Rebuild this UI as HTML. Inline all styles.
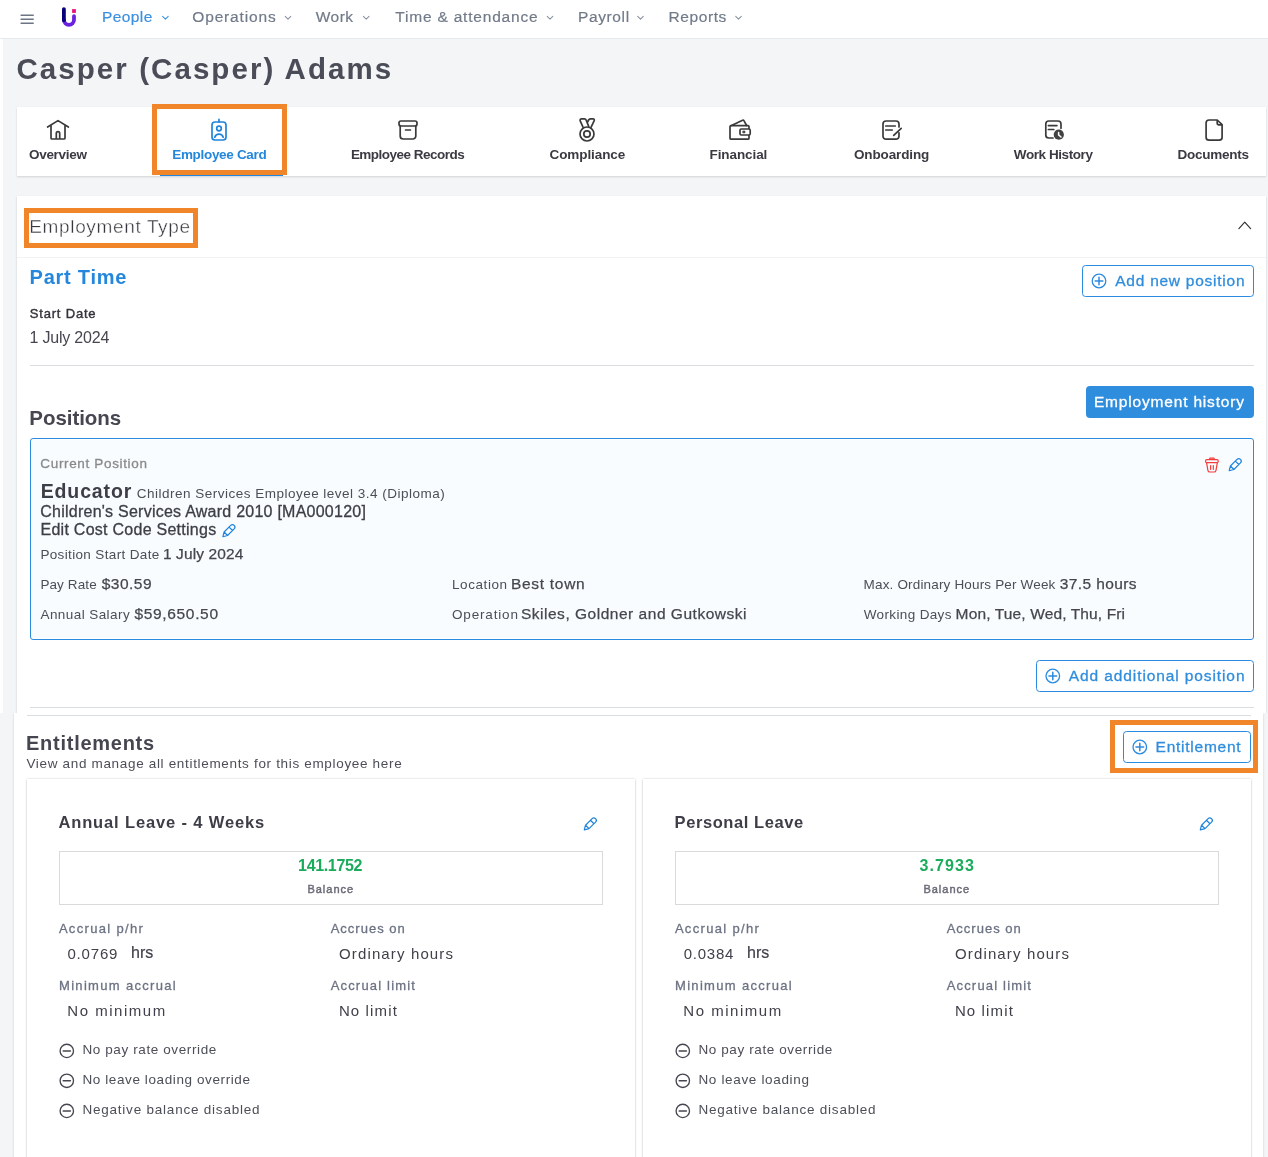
<!DOCTYPE html>
<html lang="en">
<head>
<meta charset="utf-8">
<title>Casper (Casper) Adams - Employee Card</title>
<style>
html,body{margin:0;padding:0}
body{width:1268px;height:1157px;position:relative;overflow:hidden;background:#fff;font-family:"Liberation Sans",sans-serif}
.a{position:absolute;box-sizing:border-box}
.t{position:absolute;white-space:nowrap;line-height:1;display:block}
svg{position:absolute;left:0;top:0;overflow:visible}
.s{fill:none;stroke-linecap:round;stroke-linejoin:round}
</style>
</head>
<body>
<!-- ===== upper capture (y 0..713) ===== -->
<div class="a" style="left:0;top:0;width:1268px;height:713px;overflow:hidden;background:#fff">
  <div class="a" style="left:3px;top:38px;width:1265px;height:675px;background:#f4f5f7"></div>
  <!-- header -->
  <div class="a" style="left:0;top:0;width:1268px;height:39px;background:#fff;border-bottom:1px solid #e5eaee"></div>
  <!-- tab bar -->
  <div class="a" style="left:17px;top:107px;width:1249px;height:69px;background:#fff;box-shadow:0 1px 2px rgba(0,0,0,.15)"></div>
  <div class="a" style="left:160px;top:173px;width:123px;height:3px;background:#2487dc"></div>
  <!-- employment card -->
  <div class="a" style="left:17px;top:196px;width:1249px;height:530px;background:#fff;box-shadow:0 1px 2px rgba(0,0,0,.18)"></div>
  <div class="a" style="left:17px;top:257px;width:1249px;height:1px;background:#f1f2f4"></div>
  <div class="a" style="left:30px;top:365px;width:1224px;height:1px;background:#dadee1"></div>
  <div class="a" style="left:30px;top:707px;width:1224px;height:1px;background:#dadee1"></div>
  <!-- buttons -->
  <div class="a" style="left:1082px;top:265px;width:172px;height:32px;border:1px solid #2b8bdf;border-radius:3.5px;background:#fff"></div>
  <div class="a" style="left:1086px;top:386px;width:168px;height:32px;border-radius:4px;background:#2e8ddc"></div>
  <div class="a" style="left:1036px;top:660px;width:218px;height:32px;border:1px solid #2b8bdf;border-radius:3.5px;background:#fff"></div>
  <!-- position card -->
  <div class="a" style="left:30px;top:438px;width:1224px;height:202px;border:1px solid #2b8bdf;border-radius:3px;background:#f9fcfe;box-shadow:inset 0 0 0 1px #fff"></div>
  <!-- highlight boxes -->
  <div class="a" style="left:152px;top:104px;width:135px;height:71px;border:5px solid #f1852a"></div>
  <div class="a" style="left:24px;top:208px;width:174px;height:40px;border:5px solid #f1852a"></div>
</div>
<!-- ===== lower capture (y 713..1157) ===== -->
<div class="a" style="left:0;top:713px;width:1268px;height:444px;overflow:hidden;background:#f4f5f7">
  <div class="a" style="left:14px;top:0;width:1249px;height:460px;background:#fff;box-shadow:0 1px 2px rgba(0,0,0,.18)"></div>
  <div class="a" style="left:27px;top:1.5px;width:1224px;height:1px;background:#dadee1"></div>
  <!-- cards -->
  <div class="a" style="left:27px;top:66px;width:608px;height:400px;background:#fff;box-shadow:0 0 2px rgba(0,0,0,.2),0 1px 2px rgba(0,0,0,.1)"></div>
  <div class="a" style="left:643px;top:66px;width:608px;height:400px;background:#fff;box-shadow:0 0 2px rgba(0,0,0,.2),0 1px 2px rgba(0,0,0,.1)"></div>
  <div class="a" style="left:59px;top:138px;width:544px;height:53.5px;border:1px solid #d9dadc;background:#fff"></div>
  <div class="a" style="left:675px;top:138px;width:544px;height:53.5px;border:1px solid #d9dadc;background:#fff"></div>
  <!-- entitlement button + highlight -->
  <div class="a" style="left:1123px;top:18px;width:128px;height:32px;border:1px solid #2b8bdf;border-radius:3.5px;background:#fff"></div>
  <div class="a" style="left:1110px;top:7px;width:148px;height:53px;border:5px solid #f1852a"></div>
</div>
<!-- ===== icons ===== -->
<svg width="1268" height="1157" viewBox="0 0 1268 1157">
<!-- hamburger -->
<g class="s" stroke="#6b7583" stroke-width="1.5" stroke-linecap="butt"><path d="M21.1 15.15h12.1M21.1 19.15h12.1M21.1 23.15h12.1"/></g>
<!-- logo -->
<g class="s" stroke-width="3.8" stroke-linecap="butt">
<path d="M74 16.2V19.8A5.05 5.05 0 0 1 63.9 19.8" stroke="#6a22e0"/>
<path d="M63.9 9.1V20.2" stroke="#06007a"/>
</g>
<rect x="72.1" y="9.1" width="3.8" height="3.8" fill="#e6157a"/>
<!-- nav chevrons -->
<g class="s" stroke-width="1.05" stroke="#8a92a0" transform="translate(0 .4)">
<path d="M162.6 16l2.8 2.8 2.8-2.8" stroke="#3b8fe0"/>
<path d="M285.2 16l2.8 2.8 2.8-2.8"/>
<path d="M363.4 16l2.8 2.8 2.8-2.8"/>
<path d="M547.2 16l2.8 2.8 2.8-2.8"/>
<path d="M637.7 16l2.8 2.8 2.8-2.8"/>
<path d="M735.7 16l2.8 2.8 2.8-2.8"/>
</g>
<!-- section chevron up -->
<path class="s" d="M1238.9 228.6L1244.75 222.2 1250.6 228.6" stroke="#333" stroke-width="1.2"/>
<!-- tab icons -->
<g class="s" stroke="#3a3a3a" stroke-width="1.7">
<!-- home -->
<path d="M47.6 127L58 120.6 68.4 127M51 125V138a1 1 0 0 0 1 1H64a1 1 0 0 0 1-1V125M56.3 139V133.4a1.7 1.7 0 0 1 3.4 0V139"/>
<!-- archive -->
<rect x="399" y="121" width="18" height="5" rx="2"/>
<path d="M400.2 126V136a3 3 0 0 0 3 3H412.8a3 3 0 0 0 3-3V126M405.6 130H410.4"/>
<!-- medal -->
<circle cx="587" cy="134" r="7"/><circle cx="587" cy="134" r="3.2"/>
<path d="M583 127.2L580.2 120.8a1.4 1.4 0 0 1 1.3-2h3a1.6 1.6 0 0 1 1.5 1L588.7 126.3M587.4 122.4L588.6 120a2.2 2.2 0 0 1 1.8-1.2h2.6a1.3 1.3 0 0 1 1.2 1.9L591 127.3"/>
<!-- wallet -->
<rect x="730" y="125.7" width="19" height="13.5" rx="1"/>
<path d="M731.5 125.5L742.6 120.2a1 1 0 0 1 1.3 .4L746.6 125.5"/>
<rect x="740" y="129" width="10.2" height="6" rx="1.2" fill="#fff"/>
<rect x="743.2" y="131.1" width="1.7" height="1.7" fill="#3a3a3a" stroke-width="0.8"/>
<!-- onboarding -->
<path d="M899 127V124a3 3 0 0 0-3-3H886a3 3 0 0 0-3 3V136.2a3 3 0 0 0 3 3H896a3 3 0 0 0 3-3V132.8M885.8 126H895.2M885.8 130H892.2M901.2 128.3L893.7 135.4"/>
<!-- work history -->
<path d="M1061 128.2V124a3 3 0 0 0-3-3H1048.8a3 3 0 0 0-3 3V135a3 3 0 0 0 3 3H1053M1048.4 125.6H1056.9M1048.4 129.5H1053.8"/>
<!-- documents -->
<path d="M1217.2 120H1209.1a3 3 0 0 0-3 3V137.2a3 3 0 0 0 3 3H1219.1a3 3 0 0 0 3-3V124.6ZM1217.2 120V123a1.8 1.8 0 0 0 1.8 1.8H1222"/>
</g>
<circle cx="1058.8" cy="134.7" r="5.1" fill="#424242"/>
<path class="s" d="M1058.6 132.4V134.9L1061 137" stroke="#fff" stroke-width="1.5"/>
<!-- active tab icon -->
<g class="s" stroke="#1f84da" stroke-width="1.7">
<rect x="212" y="122" width="14" height="18" rx="3"/>
<path d="M219 119.4V122M214.8 137.2a4.4 4.4 0 0 1 8.4 0"/>
<circle cx="219" cy="128.5" r="2.3"/>
</g>
<!-- plus circles -->
<g class="s" stroke="#2b8bdf" stroke-width="1.3">
<circle cx="1099" cy="281" r="6.8"/><path stroke-width="1.5" d="M1095.15 281h7.7M1099 277.15v7.7"/>
<circle cx="1052.8" cy="676" r="6.8"/><path stroke-width="1.5" d="M1048.95 676h7.7M1052.8 672.15v7.7"/>
<circle cx="1139.8" cy="747" r="6.8"/><path stroke-width="1.5" d="M1135.95 747h7.7M1139.8 743.15v7.7"/>
</g>
<!-- trash -->
<g class="s" stroke="#f53b3b" stroke-width="1.2" transform="translate(0 .5)">
<path d="M1209.6 458.9V458.2a.6 .6 0 0 1 .6-.6H1213.6a.6 .6 0 0 1 .6 .6V458.9"/>
<rect x="1205.6" y="459.2" width="12.6" height="2.9" rx="1.2"/>
<path d="M1206.6 462.4L1207.9 469.8a2 2 0 0 0 2 1.7H1214a2 2 0 0 0 2-1.7L1217.3 462.4M1210.6 465V468.8M1213.3 465V468.8"/>
</g>
<!-- pencils -->
<g class="s" stroke="#1f84da" stroke-width="1.2">
<path d="M.4 0L4.6-2.45H13.9A2.45 2.45 0 0 1 13.9 2.45H4.6ZM4.6-2.45V2.45M11.6-2.45V2.45" transform="translate(1228.9 471) rotate(-45)"/>
<path d="M.4 0L4.6-2.45H13.9A2.45 2.45 0 0 1 13.9 2.45H4.6ZM4.6-2.45V2.45M11.6-2.45V2.45" transform="translate(222.6 537) rotate(-45)"/>
<path d="M.4 0L4.6-2.45H13.9A2.45 2.45 0 0 1 13.9 2.45H4.6ZM4.6-2.45V2.45M11.6-2.45V2.45" transform="translate(584 830.2) rotate(-45)"/>
<path d="M.4 0L4.6-2.45H13.9A2.45 2.45 0 0 1 13.9 2.45H4.6ZM4.6-2.45V2.45M11.6-2.45V2.45" transform="translate(1200 830.2) rotate(-45)"/>
</g>
<!-- minus circles -->
<g class="s" stroke="#45464f" stroke-width="1.35">
<circle cx="66.8" cy="1050.9" r="6.7"/><path stroke-width="1.5" d="M63.2 1050.9h7.2"/>
<circle cx="66.8" cy="1080.8" r="6.7"/><path stroke-width="1.5" d="M63.2 1080.8h7.2"/>
<circle cx="66.8" cy="1110.9" r="6.7"/><path stroke-width="1.5" d="M63.2 1110.9h7.2"/>
<circle cx="682.8" cy="1050.9" r="6.7"/><path stroke-width="1.5" d="M679.2 1050.9h7.2"/>
<circle cx="682.8" cy="1080.8" r="6.7"/><path stroke-width="1.5" d="M679.2 1080.8h7.2"/>
<circle cx="682.8" cy="1110.9" r="6.7"/><path stroke-width="1.5" d="M679.2 1110.9h7.2"/>
</g>

</svg>
<!-- ===== text ===== -->
<div class="a" style="left:0;top:0;width:1268px;height:1157px;will-change:transform">
<span class="t" style="left:101.93px;top:9.00px;font-size:15.5px;color:#3b8fe0;letter-spacing:0.432px;-webkit-text-stroke:0.2px #3b8fe0;">People</span>
<span class="t" style="left:192.27px;top:9.00px;font-size:15.5px;color:#717a89;letter-spacing:0.845px;-webkit-text-stroke:0.2px #717a89;">Operations</span>
<span class="t" style="left:315.83px;top:9.00px;font-size:15.5px;color:#717a89;letter-spacing:0.420px;-webkit-text-stroke:0.2px #717a89;">Work</span>
<span class="t" style="left:395.35px;top:9.00px;font-size:15.5px;color:#717a89;letter-spacing:0.792px;-webkit-text-stroke:0.2px #717a89;">Time &amp; attendance</span>
<span class="t" style="left:577.93px;top:9.00px;font-size:15.5px;color:#717a89;letter-spacing:0.635px;-webkit-text-stroke:0.2px #717a89;">Payroll</span>
<span class="t" style="left:668.55px;top:9.00px;font-size:15.5px;color:#717a89;letter-spacing:0.578px;-webkit-text-stroke:0.2px #717a89;">Reports</span>
<span class="t" style="left:16.44px;top:54.00px;font-size:29.5px;color:#4a4d57;letter-spacing:2.070px;font-weight:700;">Casper (Casper) Adams</span>
<span class="t" style="left:29.01px;top:148.00px;font-size:13.5px;color:#3a3b42;letter-spacing:-0.308px;font-weight:700;">Overview</span>
<span class="t" style="left:172.22px;top:148.00px;font-size:13.5px;color:#2487dc;letter-spacing:-0.318px;font-weight:700;">Employee Card</span>
<span class="t" style="left:350.88px;top:148.00px;font-size:13.5px;color:#3a3b42;letter-spacing:-0.517px;font-weight:700;">Employee Records</span>
<span class="t" style="left:549.59px;top:148.00px;font-size:13.5px;color:#3a3b42;letter-spacing:-0.100px;font-weight:700;">Compliance</span>
<span class="t" style="left:709.50px;top:148.00px;font-size:13.5px;color:#3a3b42;letter-spacing:-0.081px;font-weight:700;">Financial</span>
<span class="t" style="left:854.01px;top:148.00px;font-size:13.5px;color:#3a3b42;letter-spacing:-0.135px;font-weight:700;">Onboarding</span>
<span class="t" style="left:1013.83px;top:148.00px;font-size:13.5px;color:#3a3b42;letter-spacing:-0.427px;font-weight:700;">Work History</span>
<span class="t" style="left:1177.50px;top:148.00px;font-size:13.5px;color:#3a3b42;letter-spacing:-0.252px;font-weight:700;">Documents</span>
<span class="t" style="left:29.25px;top:217.00px;font-size:19px;color:#36373d;letter-spacing:0.647px;-webkit-text-stroke:0.4px #fff;">Employment Type</span>
<span class="t" style="left:29.55px;top:267.00px;font-size:20px;color:#2487dc;letter-spacing:0.767px;font-weight:700;">Part Time</span>
<span class="t" style="left:29.80px;top:307.00px;font-size:13px;color:#33343b;letter-spacing:0.807px;-webkit-text-stroke:0.4px #33343b;">Start Date</span>
<span class="t" style="left:29.48px;top:330.00px;font-size:16px;color:#45464f;letter-spacing:-0.196px;">1 July 2024</span>
<span class="t" style="left:1115.27px;top:273.00px;font-size:15.5px;color:#2f8ddd;letter-spacing:0.746px;-webkit-text-stroke:0.3px #2f8ddd;">Add new position</span>
<span class="t" style="left:1093.92px;top:394.00px;font-size:15.5px;color:#ffffff;letter-spacing:0.823px;-webkit-text-stroke:0.3px #ffffff;">Employment history</span>
<span class="t" style="left:29.31px;top:408.00px;font-size:20.5px;color:#45464f;letter-spacing:-0.043px;font-weight:700;">Positions</span>
<span class="t" style="left:40.36px;top:457.00px;font-size:13.5px;color:#8a8a8a;letter-spacing:0.650px;-webkit-text-stroke:0.3px #8a8a8a;">Current Position</span>
<span class="t" style="left:40.69px;top:482.00px;font-size:19.5px;color:#3d3e47;letter-spacing:0.870px;font-weight:700;">Educator</span>
<span class="t" style="left:136.85px;top:487.00px;font-size:13.5px;color:#4c4e58;letter-spacing:0.489px;">Children Services Employee level 3.4 (Diploma)</span>
<span class="t" style="left:40.26px;top:504.00px;font-size:16px;color:#3d3e47;letter-spacing:0.245px;-webkit-text-stroke:0.3px #3d3e47;">Children's Services Award 2010 [MA000120]</span>
<span class="t" style="left:40.50px;top:522.00px;font-size:16px;color:#3d3e47;letter-spacing:0.263px;-webkit-text-stroke:0.3px #3d3e47;">Edit Cost Code Settings</span>
<span class="t" style="left:40.40px;top:548.00px;font-size:13.5px;color:#4c4e58;letter-spacing:0.351px;">Position Start Date</span>
<span class="t" style="left:162.93px;top:546.00px;font-size:15.5px;color:#45464f;letter-spacing:0.124px;-webkit-text-stroke:0.25px #45464f;">1 July 2024</span>
<span class="t" style="left:40.40px;top:578.00px;font-size:13.5px;color:#4c4e58;letter-spacing:0.106px;">Pay Rate</span>
<span class="t" style="left:101.67px;top:576.00px;font-size:15.5px;color:#45464f;letter-spacing:0.499px;-webkit-text-stroke:0.25px #45464f;">$30.59</span>
<span class="t" style="left:40.50px;top:608.00px;font-size:13.5px;color:#4c4e58;letter-spacing:0.424px;">Annual Salary</span>
<span class="t" style="left:134.47px;top:606.00px;font-size:15.5px;color:#45464f;letter-spacing:0.665px;-webkit-text-stroke:0.25px #45464f;">$59,650.50</span>
<span class="t" style="left:452.01px;top:578.00px;font-size:13.5px;color:#4c4e58;letter-spacing:0.579px;">Location</span>
<span class="t" style="left:510.88px;top:576.00px;font-size:15.5px;color:#45464f;letter-spacing:0.723px;-webkit-text-stroke:0.25px #45464f;">Best town</span>
<span class="t" style="left:451.99px;top:608.00px;font-size:13.5px;color:#4c4e58;letter-spacing:0.830px;">Operation</span>
<span class="t" style="left:520.93px;top:606.00px;font-size:15.5px;color:#45464f;letter-spacing:0.518px;-webkit-text-stroke:0.25px #45464f;">Skiles, Goldner and Gutkowski</span>
<span class="t" style="left:863.62px;top:578.00px;font-size:13.5px;color:#4c4e58;letter-spacing:0.164px;">Max. Ordinary Hours Per Week</span>
<span class="t" style="left:1059.82px;top:576.00px;font-size:15.5px;color:#45464f;letter-spacing:0.395px;-webkit-text-stroke:0.25px #45464f;">37.5 hours</span>
<span class="t" style="left:863.73px;top:608.00px;font-size:13.5px;color:#4c4e58;letter-spacing:0.363px;">Working Days</span>
<span class="t" style="left:955.62px;top:606.00px;font-size:15.5px;color:#45464f;letter-spacing:0.132px;-webkit-text-stroke:0.25px #45464f;">Mon, Tue, Wed, Thu, Fri</span>
<span class="t" style="left:1068.87px;top:668.00px;font-size:15.5px;color:#2f8ddd;letter-spacing:0.894px;-webkit-text-stroke:0.3px #2f8ddd;">Add additional position</span>
<span class="t" style="left:26.04px;top:733.00px;font-size:20px;color:#45464f;letter-spacing:0.733px;font-weight:700;">Entitlements</span>
<span class="t" style="left:26.42px;top:757.00px;font-size:13.5px;color:#4c4e58;letter-spacing:0.672px;">View and manage all entitlements for this employee here</span>
<span class="t" style="left:1155.61px;top:739.00px;font-size:15.5px;color:#2f8ddd;letter-spacing:0.749px;-webkit-text-stroke:0.3px #2f8ddd;">Entitlement</span>
<span class="t" style="left:58.44px;top:814.00px;font-size:16.5px;color:#3d3e47;letter-spacing:0.859px;font-weight:700;">Annual Leave - 4 Weeks</span>
<span class="t" style="left:298.08px;top:858.00px;font-size:16px;color:#1aab5b;letter-spacing:-0.338px;font-weight:700;">141.1752</span>
<span class="t" style="left:307.38px;top:884.00px;font-size:11px;color:#6b6c78;letter-spacing:1.019px;-webkit-text-stroke:0.45px #6b6c78;">Balance</span>
<span class="t" style="left:58.89px;top:922.00px;font-size:13px;color:#6c7283;letter-spacing:1.320px;-webkit-text-stroke:0.3px #6c7283;">Accrual p/hr</span>
<span class="t" style="left:330.65px;top:922.00px;font-size:13px;color:#6c7283;letter-spacing:1.010px;-webkit-text-stroke:0.3px #6c7283;">Accrues on</span>
<span class="t" style="left:67.44px;top:946.00px;font-size:15px;color:#40414a;letter-spacing:0.821px;">0.0769</span>
<span class="t" style="left:130.91px;top:945.00px;font-size:16px;color:#40414a;letter-spacing:0.095px;-webkit-text-stroke:0.2px #40414a;">hrs</span>
<span class="t" style="left:339.03px;top:946.00px;font-size:15px;color:#40414a;letter-spacing:1.134px;">Ordinary hours</span>
<span class="t" style="left:59.02px;top:979.00px;font-size:13px;color:#6c7283;letter-spacing:1.318px;-webkit-text-stroke:0.3px #6c7283;">Minimum accrual</span>
<span class="t" style="left:330.65px;top:979.00px;font-size:13px;color:#6c7283;letter-spacing:1.184px;-webkit-text-stroke:0.3px #6c7283;">Accrual limit</span>
<span class="t" style="left:67.27px;top:1003.00px;font-size:15px;color:#40414a;letter-spacing:1.530px;">No minimum</span>
<span class="t" style="left:338.89px;top:1003.00px;font-size:15px;color:#40414a;letter-spacing:1.135px;">No limit</span>
<span class="t" style="left:82.40px;top:1043.00px;font-size:13.5px;color:#4c4e58;letter-spacing:0.608px;">No pay rate override</span>
<span class="t" style="left:82.40px;top:1073.00px;font-size:13.5px;color:#4c4e58;letter-spacing:0.604px;">No leave loading override</span>
<span class="t" style="left:82.40px;top:1103.00px;font-size:13.5px;color:#4c4e58;letter-spacing:0.783px;">Negative balance disabled</span>
<span class="t" style="left:674.62px;top:814.00px;font-size:16.5px;color:#3d3e47;letter-spacing:0.569px;font-weight:700;">Personal Leave</span>
<span class="t" style="left:919.38px;top:858.00px;font-size:16px;color:#1aab5b;letter-spacing:1.142px;font-weight:700;">3.7933</span>
<span class="t" style="left:923.38px;top:884.00px;font-size:11px;color:#6b6c78;letter-spacing:1.019px;-webkit-text-stroke:0.45px #6b6c78;">Balance</span>
<span class="t" style="left:674.89px;top:922.00px;font-size:13px;color:#6c7283;letter-spacing:1.320px;-webkit-text-stroke:0.3px #6c7283;">Accrual p/hr</span>
<span class="t" style="left:946.65px;top:922.00px;font-size:13px;color:#6c7283;letter-spacing:1.010px;-webkit-text-stroke:0.3px #6c7283;">Accrues on</span>
<span class="t" style="left:683.63px;top:946.00px;font-size:15px;color:#40414a;letter-spacing:0.779px;">0.0384</span>
<span class="t" style="left:746.91px;top:945.00px;font-size:16px;color:#40414a;letter-spacing:0.095px;-webkit-text-stroke:0.2px #40414a;">hrs</span>
<span class="t" style="left:955.03px;top:946.00px;font-size:15px;color:#40414a;letter-spacing:1.134px;">Ordinary hours</span>
<span class="t" style="left:675.02px;top:979.00px;font-size:13px;color:#6c7283;letter-spacing:1.318px;-webkit-text-stroke:0.3px #6c7283;">Minimum accrual</span>
<span class="t" style="left:946.65px;top:979.00px;font-size:13px;color:#6c7283;letter-spacing:1.184px;-webkit-text-stroke:0.3px #6c7283;">Accrual limit</span>
<span class="t" style="left:683.27px;top:1003.00px;font-size:15px;color:#40414a;letter-spacing:1.530px;">No minimum</span>
<span class="t" style="left:954.89px;top:1003.00px;font-size:15px;color:#40414a;letter-spacing:1.135px;">No limit</span>
<span class="t" style="left:698.40px;top:1043.00px;font-size:13.5px;color:#4c4e58;letter-spacing:0.608px;">No pay rate override</span>
<span class="t" style="left:698.40px;top:1073.00px;font-size:13.5px;color:#4c4e58;letter-spacing:0.664px;">No leave loading</span>
<span class="t" style="left:698.40px;top:1103.00px;font-size:13.5px;color:#4c4e58;letter-spacing:0.783px;">Negative balance disabled</span>
</div>
</body>
</html>
